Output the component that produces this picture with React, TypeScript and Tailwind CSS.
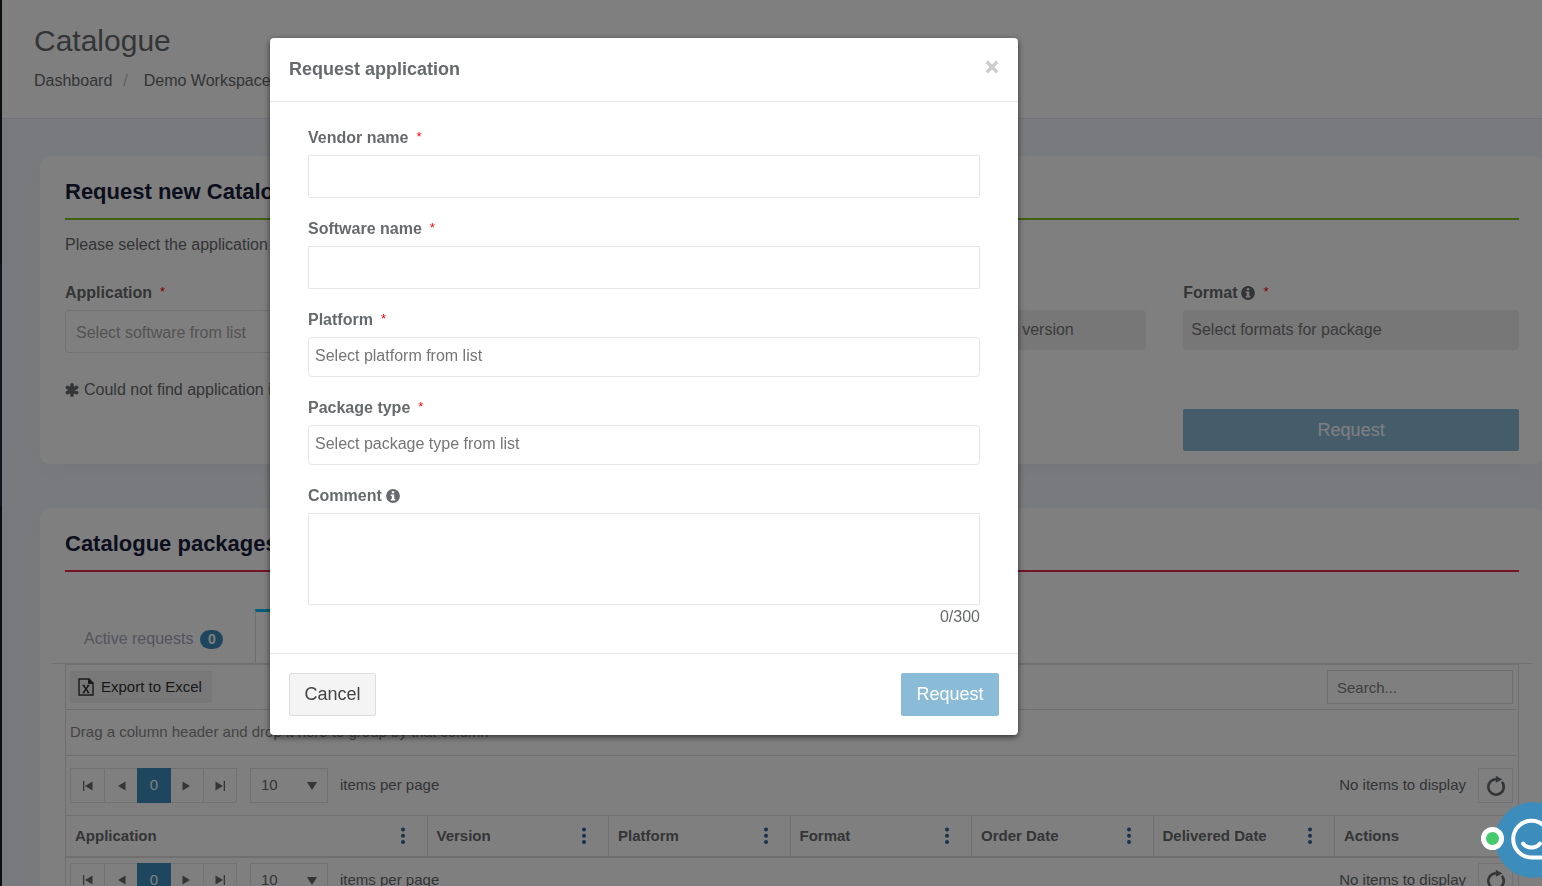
const columns = ["Application", "Version", "Platform", "Format", "Order Date", "Delivered Date", "Actions"];

function Required() {
  return <span className="ml-2 text-[13px] leading-none align-[2px] font-normal text-[#ff0000]">*</span>;
}

function InfoIcon() {
  return (
    <svg viewBox="0 0 14 14" className="inline-block ml-1 w-[14px] h-[14px] align-[-2px]">
      <circle cx="7" cy="7" r="6.900" fill="currentColor" />
      <path d="M5.800 2.200h2.500v2H5.800zM4.800 5.400h3.500v4.500h1v1.700H4.800V9.900h1V7.100h-1z" fill="#ffffff" />
    </svg>
  );
}

function AsteriskIcon() {
  return (
    <svg viewBox="0 0 14 14" className="w-[14px] h-[14px]" stroke="currentColor" strokeWidth="3.600" strokeLinecap="round">
      <path d="M7 1.900v10.200M2.400 4.400l9.200 5.200M11.600 4.400l-9.200 5.200" />
    </svg>
  );
}

function ExcelIcon() {
  return (
    <svg viewBox="0 0 16 18" className="w-4 h-[18px]" fill="none" stroke="currentColor">
      <path d="M1 1h10l4 4v12H1z" strokeWidth="1.4" />
      <path d="M10.500 1v4.500H15z" fill="currentColor" strokeWidth="1" />
      <path d="M5.500 7.500l5 7M10.500 7.500l-5 7" strokeWidth="1.400" />
      <path d="M4.500 7.300h2.500M9 7.300h2.500M4.500 14.700H7M9 14.700h2.500" strokeWidth="1" />
    </svg>
  );
}

function RefreshIcon() {
  return (
    <svg viewBox="0 0 20 22" className="w-5 h-[22px]" fill="none">
      <path d="M15.900 6.900a7.700 7.700 0 1 1-6-2.700" stroke="currentColor" strokeWidth="2.600" />
      <path d="M9.800 0.800l6.600 3.600-6.600 3.400z" fill="currentColor" />
    </svg>
  );
}

function Arrow({ flip = false, bar = false }: { flip?: boolean; bar?: boolean }) {
  return (
    <svg viewBox="0 0 12 12" className={flip ? "w-3 h-3 rotate-180" : "w-3 h-3"} fill="currentColor">
      <path d="M10.500 1.500v9L3 6z" />
      {bar && <path d="M1 1h1.300v10H1z" />}
    </svg>
  );
}

function Pager({ id, className }: { id: string; className: string }) {
  const button = "flex items-center justify-center h-[35px] border border-[#e4e4e4]";
  return (
    <div className={`flex items-center pl-1 pr-[3px] ${className}`}>
      <button type="button" aria-label="First page" className={`${button} w-[35px]`}>
        <Arrow bar />
      </button>
      <button type="button" aria-label="Previous page" className={`${button} w-8 border-x-0`}>
        <Arrow />
      </button>
      <button type="button" className="w-[34px] h-[35px] bg-[#3c8dbc] text-white">0</button>
      <button type="button" aria-label="Next page" className={`${button} w-8 border-x-0`}>
        <Arrow flip />
      </button>
      <button type="button" aria-label="Last page" className={`${button} w-[34px]`}>
        <Arrow flip bar />
      </button>
      <div className="relative ml-[13px] mr-3">
        <select id={id} className="appearance-none block w-[78px] h-[35px] pl-[10px] border border-[#e0e0e0] bg-white">
          <option>10</option>
        </select>
        <svg viewBox="0 0 10 8" className="absolute right-[11px] top-[14px] w-[10px] h-2 pointer-events-none" fill="currentColor">
          <path d="M0 0h10L5 8z" />
        </svg>
      </div>
      <label htmlFor={id}>items per page</label>
      <span className="ml-auto mr-3">No items to display</span>
      <button type="button" aria-label="Refresh" className={`${button} w-[35px]`}>
        <RefreshIcon />
      </button>
    </div>
  );
}

function RequestCard() {
  const label = "block font-bold mb-[5px]";
  const select = "appearance-none block w-full h-10 px-2 rounded bg-[#eeeeee] text-[#777777] opacity-100";
  return (
    <section className="rounded-[10px] bg-white px-[25px] pt-[21px] pb-[13px] shadow-[0_8px_20px_rgba(120,130,160,0.06)]">
      <h2 className="text-[22px] leading-[30px] font-bold text-[#181c3c] pb-[11px] border-b-2 border-[#7dc41f]">
        Request new Catalogue package
      </h2>
      <p className="mt-[13px] mb-6">Please select the application you would like to request.</p>
      <div className="grid grid-cols-4 gap-[37px]">
        <div>
          <label htmlFor="application" className={label}>Application<Required /></label>
          <input
            id="application"
            placeholder="Select software from list"
            className="block w-full h-[43px] px-[10px] pt-[2px] rounded border border-[#e5e6e7] placeholder:text-[#a6a6a6]"
          />
          <a href="#request" className="flex items-center gap-[5px] mt-[25px] whitespace-nowrap">
            <AsteriskIcon /> Could not find application in the list?
          </a>
        </div>
        <div>
          <label htmlFor="vendor" className={label}>Platform<Required /></label>
          <select id="vendor" disabled className={select}>
            <option>Select platform</option>
          </select>
        </div>
        <div>
          <label htmlFor="version" className={label}>Version<Required /></label>
          <select id="version" disabled className={select}>
            <option>Select application to choose version</option>
          </select>
        </div>
        <div>
          <label htmlFor="format" className={label}>Format<InfoIcon /><Required /></label>
          <select id="format" disabled className={select}>
            <option>Select formats for package</option>
          </select>
          <button type="button" className="mt-[59px] w-full h-[42px] rounded-xs bg-[#8abbd7] text-white text-lg">
            Request
          </button>
        </div>
      </div>
    </section>
  );
}

function PackagesCard() {
  return (
    <section className="mt-11 rounded-[10px] bg-white px-[25px] pt-[21px] pb-10 shadow-[0_8px_20px_rgba(120,130,160,0.06)]">
      <h2 className="text-[22px] leading-[30px] font-bold text-[#181c3c] pb-[11px] border-b-2 border-[#e8264f]">
        Catalogue packages
      </h2>
      <nav className="flex mt-[37px] -mx-[13px] border-b border-[#dddddd]">
        <a href="#active" className="flex items-center gap-[7px] px-8 pt-[6px] h-[54px] text-[#a7aab8]">
          Active requests
          <span className="flex items-center justify-center w-[23px] h-[19px] rounded-full bg-[#3c8dbc] text-white text-sm font-bold">0</span>
        </a>
        <a href="#packages" className="flex items-center px-8 h-[54px] border-x border-x-[#dddddd] border-t-3 border-t-[#00c0ef]">
          Packages
        </a>
      </nav>
      <div className="border border-[#e0e0e0] pr-[2px] text-[15px]">
        <div className="flex items-center justify-between h-[45px] pl-1 pr-[3px] border-b border-[#dddddd]">
          <button type="button" className="flex items-center gap-[7px] h-8 px-2 w-[142px] bg-[#f0f0f0] text-[#333333] whitespace-nowrap">
            <ExcelIcon />
            Export to Excel
          </button>
          <input
            aria-label="Search"
            placeholder="Search..."
            className="w-[186px] h-[34px] px-[9px] border border-[#dddddd] placeholder:text-[#808080]"
          />
        </div>
        <p className="flex items-center h-[46px] px-1 border-b border-[#dddddd] text-[#888888]">
          Drag a column header and drop it here to group by that column
        </p>
        <Pager id="page-size-top" className="py-3" />
        <table className="w-full table-fixed border-t border-b-2 border-[#e0e0e0] text-left">
          <thead>
            <tr>
              {columns.map((name, i) => (
                <th key={name} className={i === 0 ? "w-[361px] h-[41px] px-[9px]" : "h-[41px] px-[9px] border-l border-[#e0e0e0]"}>
                  <div className="flex items-center justify-between">
                    {name}
                    {name !== "Actions" && (
                      <button type="button" aria-label={`${name} menu`} className="mr-3 text-[#2b659f]">
                        <svg viewBox="0 0 6 18" className="w-[6px] h-[18px]" fill="currentColor">
                          <circle cx="3" cy="2.500" r="2" />
                          <circle cx="3" cy="8.800" r="2" />
                          <circle cx="3" cy="15.100" r="2" />
                        </svg>
                      </button>
                    )}
                  </div>
                </th>
              ))}
            </tr>
          </thead>
        </table>
        <Pager id="page-size-bottom" className="pt-[5px] pb-3" />
      </div>
    </section>
  );
}

function RequestModal() {
  const label = "block font-bold mb-[5px]";
  const input = "block w-full h-[43px] px-3 mb-[19px] border border-[#e5e6e7] rounded-[1px]";
  const select = "appearance-none block w-full h-10 px-[6px] pb-[2px] mb-[19px] rounded border border-[#e5e6e7] bg-white text-[#757575]";
  return (
    <div className="fixed inset-0 flex items-start bg-black/50 pl-[270px] pt-[38px]">
      <div
        role="dialog"
        aria-labelledby="modal-title"
        className="w-full max-w-[748px] rounded bg-white shadow-[0_2px_6px_rgba(0,0,0,0.6)]"
      >
        <div className="flex items-start justify-between px-[19px] pt-[18px] pb-[19px] border-b border-[#e5e5e5]">
          <h4 id="modal-title" className="text-lg leading-[26px] font-bold">Request application</h4>
          <button type="button" aria-label="Close" className="pt-1 text-[#cccccc]">
            <svg viewBox="0 0 14 14" className="w-[14px] h-[14px]" stroke="currentColor" strokeWidth="3.400">
              <path d="M1.800 1.800l10.400 10.400M12.200 1.800L1.800 12.200" />
            </svg>
          </button>
        </div>
        <form className="px-[38px] pt-6 pb-6">
          <label htmlFor="vendor-name" className={label}>Vendor name<Required /></label>
          <input id="vendor-name" className={input} />
          <label htmlFor="software-name" className={label}>Software name<Required /></label>
          <input id="software-name" className={input} />
          <label htmlFor="platform" className={label}>Platform<Required /></label>
          <select id="platform" className={select}>
            <option>Select platform from list</option>
          </select>
          <label htmlFor="package-type" className={label}>Package type<Required /></label>
          <select id="package-type" className={select}>
            <option>Select package type from list</option>
          </select>
          <label htmlFor="comment" className={label}>Comment<InfoIcon /></label>
          <textarea id="comment" className="block w-full h-[92px] px-3 py-2 border border-[#e5e6e7] rounded-[1px] resize-none" />
          <p className="text-right">0/300</p>
        </form>
        <div className="flex justify-between px-[19px] py-[19px] border-t border-[#e5e5e5] text-lg">
          <button type="button" className="w-[87px] h-[43px] pb-[2px] rounded-xs border border-[#dddddd] bg-[#f4f4f4] text-[#444444]">Cancel</button>
          <button type="button" className="w-[98px] h-[43px] pb-[2px] rounded-xs bg-[#8abbd7] text-white">Request</button>
        </div>
      </div>
    </div>
  );
}

function ChatButton() {
  return (
    <button type="button" aria-label="Open chat" className="fixed -right-[29px] bottom-2 w-[76px] h-[76px] rounded-full bg-[#3c8dbc]">
      <svg viewBox="0 0 76 76" className="w-full h-full" fill="none" stroke="#ffffff" strokeLinecap="round">
        <path d="M36.500 18.800a18.300 18.300 0 0 0 0 36.600h18.300V37.100A18.300 18.300 0 0 0 36.500 18.800z" strokeWidth="4" />
        <path d="M28 41.500c4 5.300 13 5.300 17 0" strokeWidth="4" />
      </svg>
      <span className="absolute -left-[14px] top-[25px] w-[23px] h-[23px] rounded-full border-[5px] border-white bg-[#45c96d]" />
    </button>
  );
}

export default function App() {
  return (
    <div className="flex h-screen overflow-hidden bg-[#f3f5fa] font-['Liberation_Sans',Arial,sans-serif] text-base text-[#676a6c]">
      <aside className="w-[2px] shrink-0 flex flex-col bg-[#14201f]">
        <div className="h-[264px]" />
        <div className="h-[242px] bg-[#222d3c]" />
      </aside>
      <div className="flex-1 min-w-0">
        <header className="bg-white px-8 pt-[23px] pb-[25px] border-b border-[#e2e6ec]">
          <h1 className="text-3xl leading-9 mb-[10px]">Catalogue</h1>
          <nav className="flex">
            <a href="#dashboard">Dashboard</a>
            <span className="ml-[11px] mr-4 text-[#bbbbbb]">/</span>
            <a href="#workspace">Demo Workspace</a>
          </nav>
        </header>
        <main className="pt-[37px] pl-[38px] -mr-[2px]">
          <RequestCard />
          <PackagesCard />
        </main>
      </div>
      <RequestModal />
      <ChatButton />
    </div>
  );
}
